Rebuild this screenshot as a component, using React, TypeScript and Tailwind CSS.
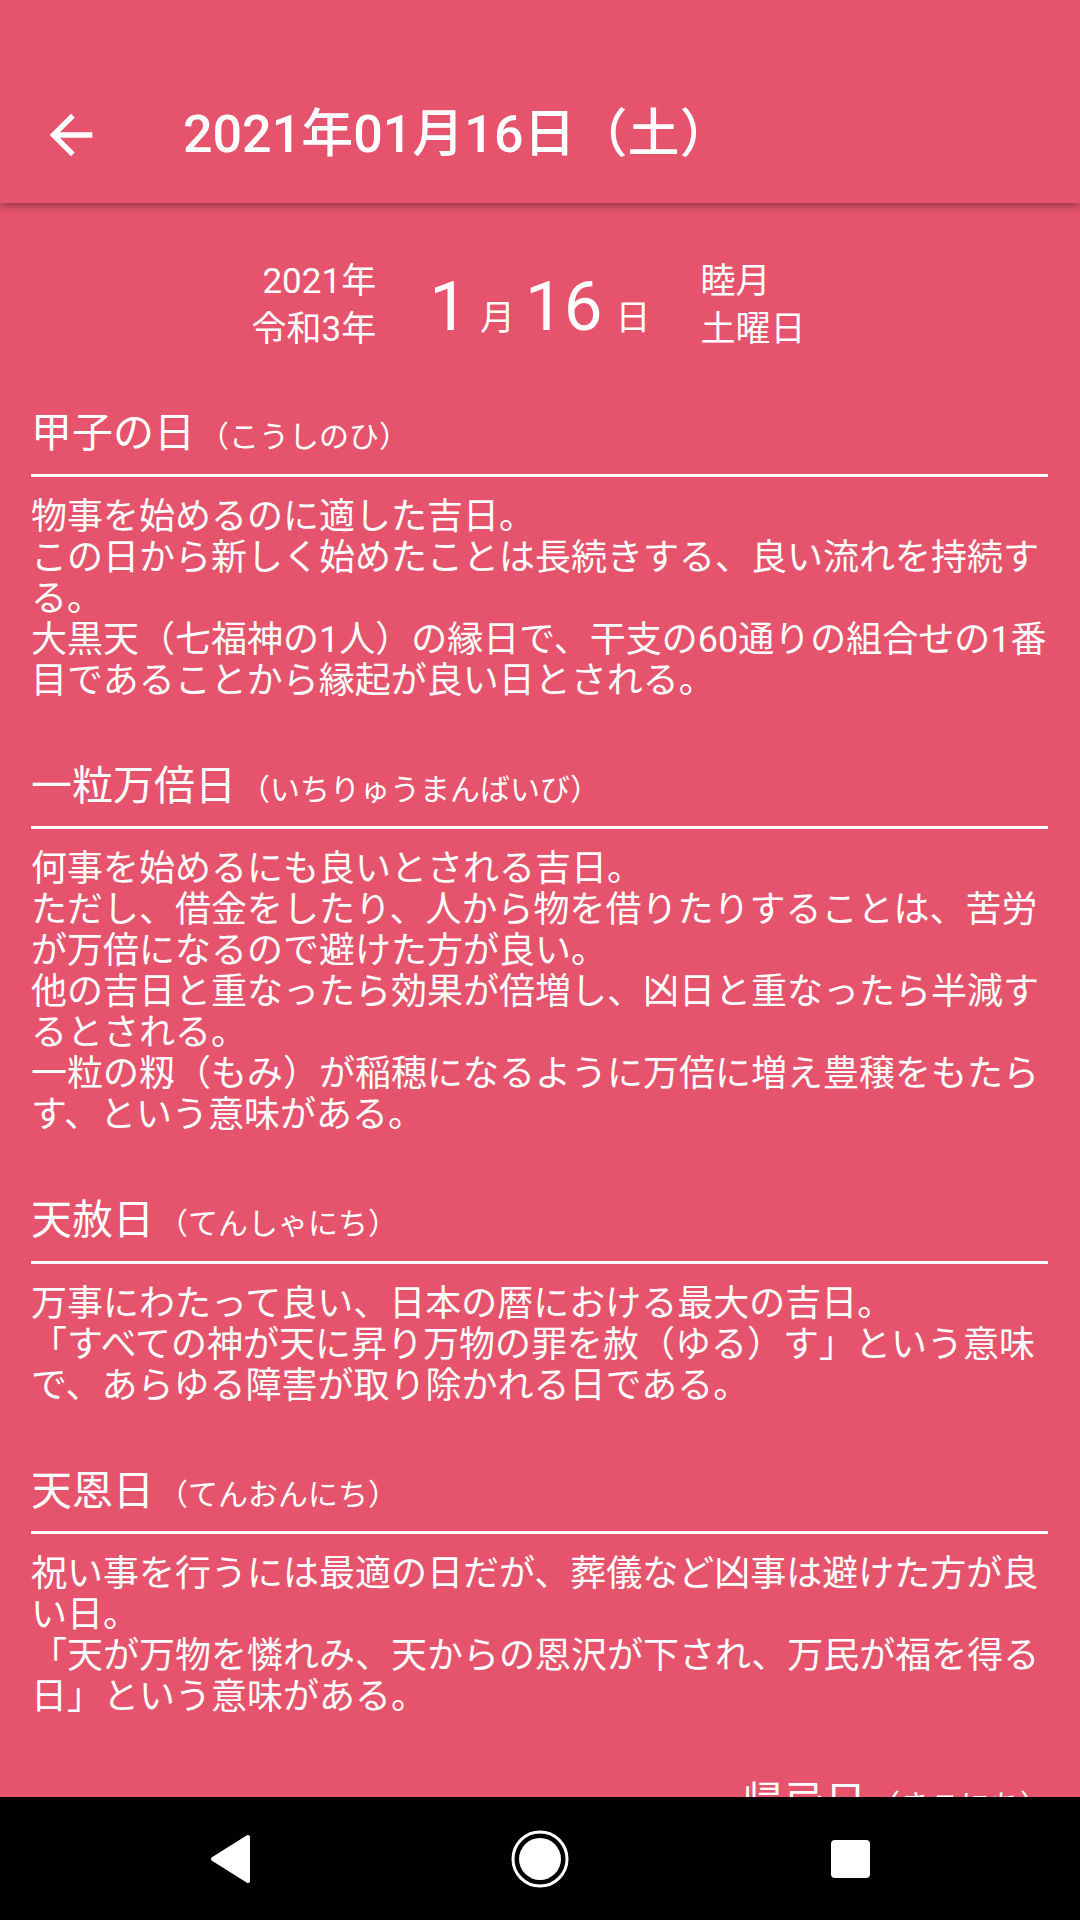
import React from "react";

type Section = {
    title: string;
    reading: string;
    lines: string[];
};

const sections: Section[] = [
    {
        title: "甲子の日",
        reading: "（こうしのひ）",
        lines: [
            "物事を始めるのに適した吉日。",
            "この日から新しく始めたことは長続きする、良い流れを持続す",
            "る。",
            "大黒天（七福神の1人）の縁日で、干支の60通りの組合せの1番",
            "目であることから縁起が良い日とされる。",
        ],
    },
    {
        title: "一粒万倍日",
        reading: "（いちりゅうまんばいび）",
        lines: [
            "何事を始めるにも良いとされる吉日。",
            "ただし、借金をしたり、人から物を借りたりすることは、苦労",
            "が万倍になるので避けた方が良い。",
            "他の吉日と重なったら効果が倍増し、凶日と重なったら半減す",
            "るとされる。",
            "一粒の籾（もみ）が稲穂になるように万倍に増え豊穣をもたら",
            "す、という意味がある。",
        ],
    },
    {
        title: "天赦日",
        reading: "（てんしゃにち）",
        lines: [
            "万事にわたって良い、日本の暦における最大の吉日。",
            "「すべての神が天に昇り万物の罪を赦（ゆる）す」という意味",
            "で、あらゆる障害が取り除かれる日である。",
        ],
    },
    {
        title: "天恩日",
        reading: "（てんおんにち）",
        lines: [
            "祝い事を行うには最適の日だが、葬儀など凶事は避けた方が良",
            "い日。",
            "「天が万物を憐れみ、天からの恩沢が下され、万民が福を得る",
            "日」という意味がある。",
        ],
    },
];

function SectionTitle({ title, reading }: { title: string; reading: string }) {
    return (
        <div className="flex items-baseline leading-[46px] whitespace-nowrap">
            <span className="text-[41px]">{title}</span>
            <span className="ml-[4px] text-[30px]">{reading}</span>
        </div>
    );
}

export default function App() {
    return (
        <div className="w-[1080px] h-[1920px] flex flex-col overflow-hidden bg-[#E5546C] text-white font-[Roboto,'Noto_Sans_CJK_JP',sans-serif]">
            {/* app bar */}
            <header className="relative z-10 h-[203px] shrink-0 flex items-center pt-[66px] bg-[#E5546C] shadow-[0_3px_8px_rgba(0,0,0,0.35)]">
                <svg className="ml-[39px] w-[64px] h-[64px]" viewBox="0 0 24 24" fill="white">
                    <path d="M20 11H7.83l5.59-5.59L12 4l-8 8 8 8 1.41-1.41L7.83 13H20v-2z" />
                </svg>
                <h1 className="ml-[80px] text-[52px] font-medium leading-none whitespace-nowrap">
                    2021年01月16日（土）
                </h1>
            </header>

            <main className="flex-1 min-h-0 overflow-hidden pl-[31px] pr-[32px]">
                {/* date summary */}
                <div className="mt-[55px] flex items-center justify-center pr-[22px]">
                    <div className="text-right text-[35px] leading-[48px] whitespace-nowrap">
                        <div>2021年</div>
                        <div>令和3年</div>
                    </div>
                    <div className="ml-[53px] mr-[50px] flex items-baseline whitespace-nowrap">
                        <span className="text-[69px] leading-none">1</span>
                        <span className="ml-[12px] text-[35px] leading-none">月</span>
                        <span className="ml-[10px] text-[69px] leading-none">16</span>
                        <span className="ml-[13px] text-[35px] leading-none">日</span>
                    </div>
                    <div className="text-[35px] leading-[48px] whitespace-nowrap">
                        <div>睦月</div>
                        <div>土曜日</div>
                    </div>
                </div>

                {sections.map((s, i) => (
                    <section key={s.title} className={i === 0 ? "mt-[56px]" : "mt-[61px]"}>
                        <SectionTitle title={s.title} reading={s.reading} />
                        <div className="mt-[13.5px] h-[3px] bg-white" />
                        <div className="mt-[20px] text-[36px] leading-[41px]">
                            {s.lines.map((line, idx) => (
                                <div key={idx} className="whitespace-nowrap">
                                    {line}
                                </div>
                            ))}
                        </div>
                    </section>
                ))}

                <section className="mt-[61px] pl-[712px]">
                    <SectionTitle title="帰忌日" reading="（きこにち）" />
                </section>
            </main>

            {/* system navigation */}
            <nav className="h-[123px] shrink-0 bg-black flex items-center justify-center gap-[246px]">
                <div className="w-[64px] h-[64px] flex items-center justify-center">
                    <svg width="41" height="50" viewBox="0 0 41 50">
                        <path d="M38 3 L38 47 L3 25 Z" fill="white" stroke="white" strokeWidth="4" strokeLinejoin="round" />
                    </svg>
                </div>
                <div className="w-[64px] h-[64px] flex items-center justify-center">
                    <svg width="60" height="60" viewBox="0 0 60 60">
                        <circle cx="30" cy="30" r="27" fill="none" stroke="white" strokeWidth="3" />
                        <circle cx="30" cy="30" r="21" fill="white" />
                    </svg>
                </div>
                <div className="w-[64px] h-[64px] flex items-center justify-center">
                    <div className="w-[39px] h-[38px] rounded-[4px] bg-white" />
                </div>
            </nav>
        </div>
    );
}
